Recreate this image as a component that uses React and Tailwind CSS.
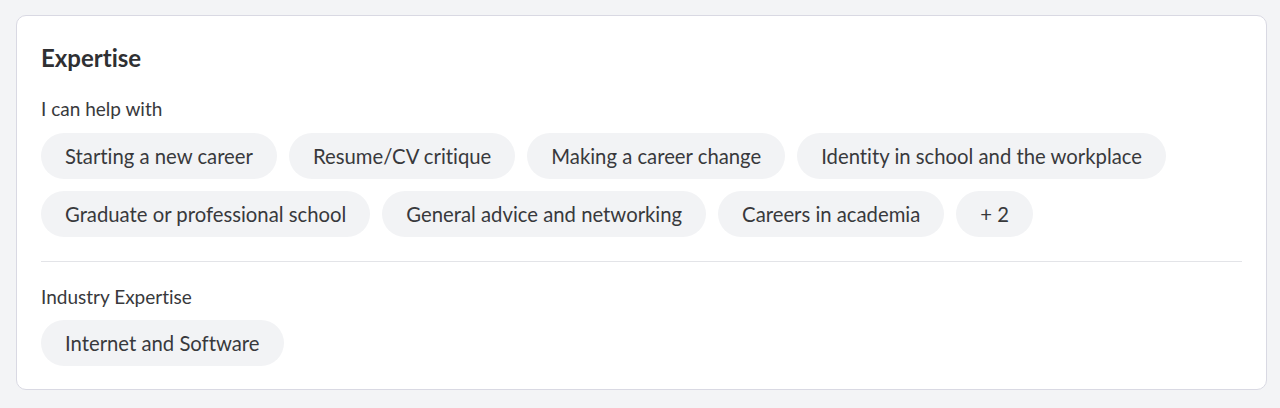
import React from 'react';

const helpTopics = [
  'Starting a new career',
  'Resume/CV critique',
  'Making a career change',
  'Identity in school and the workplace',
  'Graduate or professional school',
  'General advice and networking',
  'Careers in academia',
  '+ 2',
];

const industries = ['Internet and Software'];

function Chip({ label }) {
  return (
    <span className="inline-flex items-center h-[46px] px-[24px] rounded-full bg-[#f2f3f5] text-[20.3px] text-[#38393c]">
      {label}
    </span>
  );
}

export default function App() {
  return (
    <div
      className="min-h-[408px] bg-[#f3f4f6] pt-[15px] pl-[16px] pr-[13px] pb-[17px] [font-variant-ligatures:none]"
      style={{ fontFamily: 'Lato, "Noto Sans", sans-serif' }}
    >
      <div className="bg-white border border-[#d9d9e3] rounded-[10px] px-[24px] pt-[27px] pb-[23px]">
        <h2 className="text-[24px] leading-[30px] font-bold text-[#2f3033]">Expertise</h2>

        <p className="mt-[24px] text-[19px] leading-[24px] text-[#38393c]">I can help with</p>
        <div className="mt-[12px] flex flex-wrap gap-[12px]">
          {helpTopics.map((t) => (
            <Chip key={t} label={t} />
          ))}
        </div>

        <div className="mt-[24px] border-t border-[#e3e4e8]" />

        <p className="mt-[23px] text-[19px] leading-[24px] text-[#38393c]">Industry Expertise</p>
        <div className="mt-[11px] flex flex-wrap gap-[12px]">
          {industries.map((t) => (
            <Chip key={t} label={t} />
          ))}
        </div>
      </div>
    </div>
  );
}
